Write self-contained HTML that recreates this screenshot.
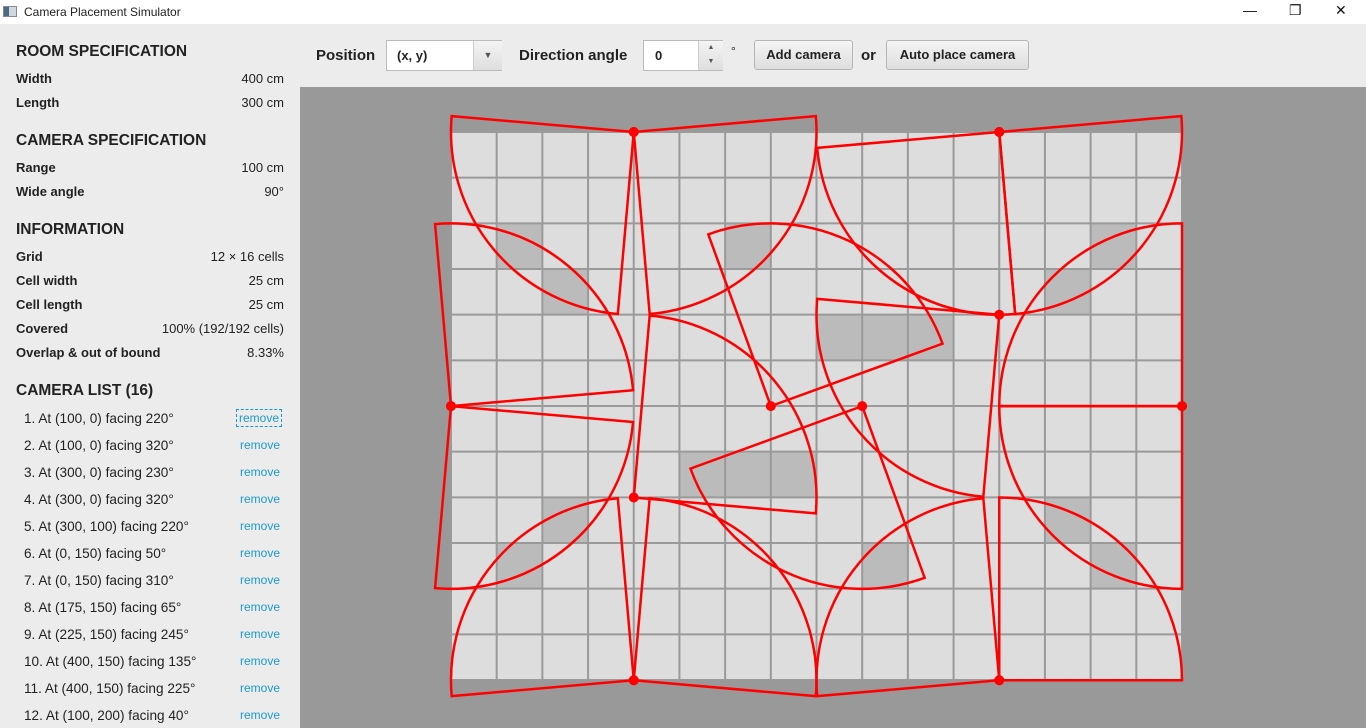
<!DOCTYPE html>
<html><head><meta charset="utf-8"><style>
*{margin:0;padding:0;box-sizing:border-box}
body{width:1366px;height:728px;overflow:hidden;background:#ececec;font-family:"Liberation Sans",sans-serif;position:relative;color:#222}
.title{position:absolute;left:0;top:0;width:1366px;height:24px;background:#fff;font-size:12px}
.title span{position:absolute;left:24px;top:5px}
.ic{position:absolute;left:3px;top:6px;width:14px;height:11px;border:1px solid #889;background:linear-gradient(90deg,#4a6a80 40%,#cfd8de 40%)}
.wc{position:absolute;top:2px;font-size:14px;color:#111}
.left{position:absolute;left:0;top:24px;width:300px;height:704px}
.h{position:absolute;left:16px;font-weight:bold;font-size:15.5px;color:#222}
.r{position:absolute;left:16px;width:268px;font-size:13px;font-weight:bold}
.r i{font-style:normal;font-weight:normal;position:absolute;right:0}
.li{position:absolute;left:24px;width:260px;font-size:13.6px}
.li b{font-weight:normal;position:absolute;right:4px;color:#1a9ad0;font-size:12px}
.canvas{position:absolute;left:300px;top:87px;width:1066px;height:641px;background:#999}
.tb{position:absolute;font-weight:bold;font-size:15px}
.btn{position:absolute;top:40px;height:30px;border:1px solid #b5b5b5;border-radius:3px;background:linear-gradient(#f4f4f4,#dedede);font-weight:bold;font-size:13px;text-align:center;line-height:28px}
</style></head><body>
<div class="title"><div class="ic"></div><span>Camera Placement Simulator</span>
<div class="wc" style="left:1243px">&#8212;</div><div class="wc" style="left:1289px">&#10064;</div><div class="wc" style="left:1335px">&#10005;</div></div>
<div class="left">
<div class="h" style="top:19px">ROOM SPECIFICATION</div>
<div class="r" style="top:47px">Width<i>400 cm</i></div>
<div class="r" style="top:71px">Length<i>300 cm</i></div>
<div class="h" style="top:108px">CAMERA SPECIFICATION</div>
<div class="r" style="top:136px">Range<i>100 cm</i></div>
<div class="r" style="top:160px">Wide angle<i>90°</i></div>
<div class="h" style="top:197px">INFORMATION</div>
<div class="r" style="top:225px">Grid<i>12 × 16 cells</i></div>
<div class="r" style="top:249px">Cell width<i>25 cm</i></div>
<div class="r" style="top:273px">Cell length<i>25 cm</i></div>
<div class="r" style="top:297px">Covered<i>100% (192/192 cells)</i></div>
<div class="r" style="top:321px">Overlap &amp; out of bound<i>8.33%</i></div>
<div class="h" style="top:358px">CAMERA LIST (16)</div>
<div id="list"></div>
</div>
<div class="tb" style="left:316px;top:47px">Position</div>
<div style="position:absolute;left:386px;top:40px;width:116px;height:31px;background:#fff;border:1px solid #bbb;font-weight:bold;font-size:13px;padding:7px 10px">(x, y)<span style="position:absolute;left:86px;top:0;width:29px;height:29px;background:linear-gradient(#f4f4f4,#dedede);border-left:1px solid #ccc;text-align:center;line-height:29px;font-size:9px;color:#555">&#9660;</span></div>
<div class="tb" style="left:519px;top:47px">Direction angle</div>
<div style="position:absolute;left:643px;top:40px;width:80px;height:31px;background:#fff;border:1px solid #bbb;font-weight:bold;font-size:13px;padding:7px 11px">0<span style="position:absolute;left:54px;top:0;width:25px;height:29px;background:linear-gradient(#f4f4f4,#dedede);border-left:1px solid #ccc;font-size:7px;color:#555;text-align:center;line-height:14px">&#9650;<br>&#9660;</span></div>
<div style="position:absolute;left:731px;top:44px;font-size:12px">°</div>
<div class="btn" style="left:754px;width:99px">Add camera</div>
<div class="tb" style="left:861px;top:47px">or</div>
<div class="btn" style="left:886px;width:143px">Auto place camera</div>
<div class="canvas"></div>
<svg id="s" width="1366" height="728" style="position:absolute;left:0;top:0"></svg>
<script>
var cams=[[100,0,220],[100,0,320],[300,0,230],[300,0,320],[300,100,220],[0,150,50],[0,150,310],[175,150,65],[225,150,245],[400,150,135],[400,150,225],[100,200,40],[100,300,40],[100,300,140],[300,300,45],[300,300,140]];
var L='';
for(var i=0;i<12;i++){var c=cams[i];var y=387+i*27;
L+='<div class="li" style="top:'+y+'px">'+(i+1)+'. At ('+c[0]+', '+c[1]+') facing '+c[2]+'°<b'+(i==0?' style="border:1px dashed #1a9ad0;padding:1px 2px;right:2px;top:-2px"':'')+'>remove</b></div>';}
document.getElementById('list').innerHTML=L;
var ox=451,oy=132,cw=731/16,ch=548/12,k=731/400,R=100*k;
var dark=[[1,2],[2,3],[6,2],[14,2],[13,3],[8,4],[9,4],[10,4],[5,7],[6,7],[7,7],[2,8],[1,9],[13,8],[14,9],[9,9]];
var s='<rect x="'+ox+'" y="'+oy+'" width="731" height="548" fill="#dddddd"/>';
dark.forEach(function(d){s+='<rect x="'+(ox+d[0]*cw)+'" y="'+(oy+d[1]*ch)+'" width="'+cw+'" height="'+ch+'" fill="#bbbbbb"/>';});
for(var c=0;c<=16;c++){var x=ox+c*cw;s+='<line x1="'+x+'" y1="'+oy+'" x2="'+x+'" y2="'+(oy+548)+'" stroke="#9a9a9a" stroke-width="2"/>';}
for(var r=0;r<=12;r++){var y=oy+r*ch;s+='<line x1="'+ox+'" y1="'+y+'" x2="'+(ox+731)+'" y2="'+y+'" stroke="#9a9a9a" stroke-width="2"/>';}
var dots='';
cams.forEach(function(c){var cx=ox+c[0]*k,cy=oy+c[1]*k;var a1=(c[2]-45)*Math.PI/180,a2=(c[2]+45)*Math.PI/180;
var x1=cx+R*Math.cos(a1),y1=cy-R*Math.sin(a1),x2=cx+R*Math.cos(a2),y2=cy-R*Math.sin(a2);
s+='<path d="M'+cx+' '+cy+'L'+x1+' '+y1+'A'+R+' '+R+' 0 0 0 '+x2+' '+y2+'Z" fill="none" stroke="#ff0000" stroke-width="2.5"/>';
dots+='<circle cx="'+cx+'" cy="'+cy+'" r="5" fill="#ff0000"/>';});
document.getElementById('s').innerHTML=s+dots;
</script>
</body></html>
